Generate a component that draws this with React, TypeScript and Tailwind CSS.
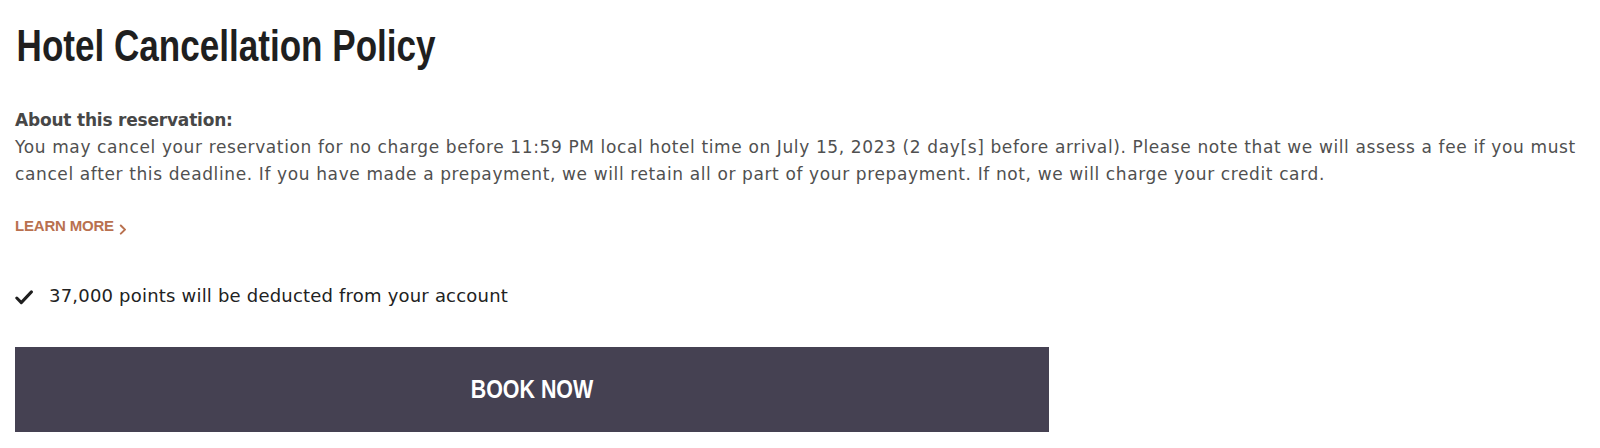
import React from 'react';

const CheckIcon = () => (
  <svg width="18" height="15" viewBox="0 0 18 15" fill="none" className="shrink-0 translate-y-[1px]">
    <path d="M1.8 8 L6.3 12.6 L16.4 1.9" stroke="#1f1f1f" strokeWidth="3" strokeLinecap="round" strokeLinejoin="round" />
  </svg>
);

const ChevronIcon = () => (
  <svg width="8" height="11" viewBox="0 0 8 11" fill="none" className="translate-y-[3px]">
    <path d="M1.8 1.5 L6 5.6 L1.8 9.6" stroke="#b9714f" strokeWidth="2" strokeLinecap="round" strokeLinejoin="round" />
  </svg>
);

export default function App() {
  return (
    <div className="bg-white w-[1600px] h-[448px] pl-[15px] pr-[4px] pt-[21px] font-['DejaVu_Sans',sans-serif]">
      <h1 className="text-[44px] leading-[50px] font-bold text-[#1f1f1f] font-['Liberation_Sans',Arial,sans-serif] whitespace-nowrap">
        <span className="inline-block origin-left scale-x-[0.797] pl-[2px]">Hotel Cancellation Policy</span>
      </h1>

      <div className="mt-[36px] text-[17px] leading-[27px] tracking-[0.62px] text-[#505050]">
        <p className="font-bold text-[#474747] tracking-[-0.2px]">About this reservation:</p>
        <p>
          You may cancel your reservation for no charge before 11:59 PM local hotel time on July 15, 2023 (2 day[s] before arrival). Please note that we will assess a fee if you must cancel after this deadline. If you have made a prepayment, we will retain all or part of your prepayment. If not, we will charge your credit card.
        </p>
      </div>

      <a className="mt-[28px] flex items-center gap-[5px] h-[20px] text-[15px] leading-[20px] tracking-[-0.2px] font-bold uppercase text-[#b9714f] font-['Liberation_Sans',Arial,sans-serif]">
        Learn More
        <ChevronIcon />
      </a>

      <div className="mt-[47px] flex items-center gap-[16px] text-[18px] leading-[26px] tracking-[0.2px] text-[#222]">
        <CheckIcon />
        <span>37,000 points will be deducted from your account</span>
      </div>

      <button className="mt-[38px] flex items-center justify-center w-[1034px] h-[85px] bg-[#454152] text-white text-[25.5px] font-bold font-['Liberation_Sans',Arial,sans-serif]">
        <span className="inline-block scale-x-[0.84]">BOOK NOW</span>
      </button>
    </div>
  );
}
